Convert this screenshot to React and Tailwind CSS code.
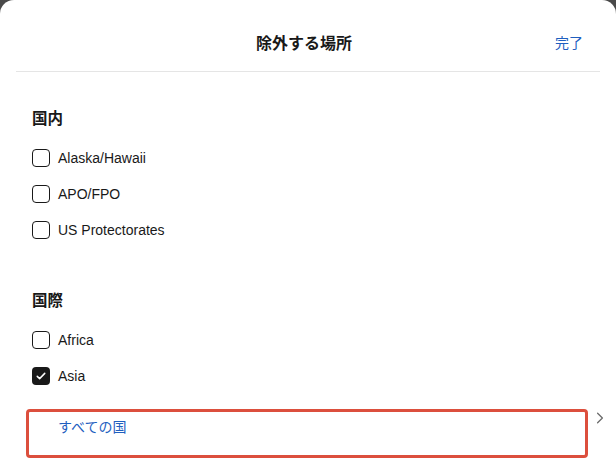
import React from "react";

const Checkbox = ({ checked }) =>
  checked ? (
    <span className="flex h-[18px] w-[18px] items-center justify-center rounded-[4px] bg-[#191919]">
      <svg viewBox="0 0 16 16" className="h-[12px] w-[12px]" fill="none">
        <path d="M3 8.5l3.2 3L13 4.5" stroke="white" strokeWidth="2" strokeLinecap="round" strokeLinejoin="round" />
      </svg>
    </span>
  ) : (
    <span className="block h-[18px] w-[18px] rounded-[4px] border-[1.5px] border-[#191919] bg-white" />
  );

const Row = ({ label, checked }) => (
  <div className="flex h-[36px] items-center gap-[8px]">
    <Checkbox checked={checked} />
    <span className="text-[14px] text-[#191919]">{label}</span>
  </div>
);

const Section = ({ title, items }) => (
  <div>
    <h2 className="flex h-[30px] items-center text-[15.5px] font-bold text-[#191919]">{title}</h2>
    <div className="mt-[6px]">
      {items.map((item) => (
        <Row key={item.label} label={item.label} checked={item.checked} />
      ))}
    </div>
  </div>
);

export default function App() {
  return (
    <div
      className="h-[465px] w-[616px] overflow-hidden bg-[#4a4a4a]"
      style={{ fontFamily: '"Liberation Sans", "Noto Sans CJK JP", sans-serif' }}
    >
      <div className="h-full rounded-t-[14px] bg-white">
        {/* Header */}
        <div className="relative mx-4 flex h-[72px] items-center justify-center border-b border-[#e5e5e5] pr-[8px] pt-[16px]">
          <h1 className="text-[16px] font-bold text-[#191919]">除外する場所</h1>
          <button className="absolute right-[17px] text-[14px] text-[#1f5fbf]">完了</button>
        </div>

        {/* Body */}
        <div className="pl-[32px] pt-[32px]">
          <Section
            title="国内"
            items={[
              { label: "Alaska/Hawaii" },
              { label: "APO/FPO" },
              { label: "US Protectorates" },
            ]}
          />
          <div className="mt-[38px]">
            <Section
              title="国際"
              items={[{ label: "Africa" }, { label: "Asia", checked: true }]}
            />
          </div>
        </div>

        {/* All countries */}
        <div className="mt-[15px] flex items-start">
          <div className="ml-[26px] h-[49px] w-[562px] rounded-[4px] border-[3px] border-[#dc4f3d] pl-[29px] pt-[3px]">
            <span className="text-[14px] text-[#1f5fbf]">すべての国</span>
          </div>
          <svg viewBox="0 0 10 16" className="ml-[8px] mt-[2px] h-[14px] w-[8px]" fill="none">
            <path d="M2 2l6 6-6 6" stroke="#6b6b6b" strokeWidth="1.6" strokeLinecap="round" strokeLinejoin="round" />
          </svg>
        </div>
      </div>
    </div>
  );
}
